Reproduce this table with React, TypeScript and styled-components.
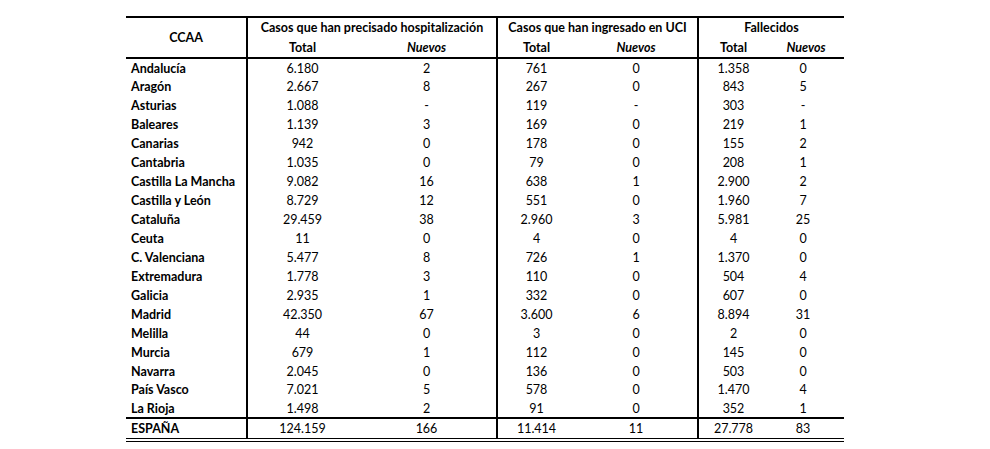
import styled, { createGlobalStyle } from "styled-components";

const GlobalStyle = createGlobalStyle`
  body {
    margin: 0;
    background: #ffffff;
    font-family: Lato, "Open Sans", sans-serif;
    color: #000000;
  }
`;

const Page = styled.div`
  width: 990px;
  height: 449px;
  padding: 16px 0 0 126px;
  box-sizing: border-box;
  overflow: hidden;
`;

const Table = styled.table`
  border-collapse: collapse;
  table-layout: fixed;
  width: 718px;
  font-size: 12.5px;
  border-top: 2px solid #000;
  border-bottom: 4px double #000;
`;

const HeadRow = styled.tr<{ $last?: boolean }>`
  height: ${(p) => (p.$last ? "21px" : "20px")};
  border-bottom: ${(p) => (p.$last ? "2px solid #000" : "none")};
`;

const Row = styled.tr<{ $total?: boolean }>`
  height: ${(p) => (p.$total ? "22px" : "18.95px")};
  border-top: ${(p) => (p.$total ? "2px solid #000" : "none")};
`;

const HeadCell = styled.th<{ $italic?: boolean; $divider?: boolean }>`
  padding: 0;
  font-weight: 700;
  font-style: ${(p) => (p.$italic ? "italic" : "normal")};
  text-align: center;
  vertical-align: middle;
  border-right: ${(p) => (p.$divider ? "2px solid #000" : "none")};
  line-height: 19px;
`;

const NameCell = styled.td`
  padding: 2px 0 0 5px;
  font-weight: 700;
  text-align: left;
  border-right: 2px solid #000;
  line-height: 16px;
  white-space: nowrap;
`;

const NumCell = styled.td<{ $divider?: boolean; $shift?: number }>`
  padding: 2px ${(p) => p.$shift ?? 0}px 0 0;
  text-align: center;
  border-right: ${(p) => (p.$divider ? "2px solid #000" : "none")};
  line-height: 16px;
`;

type Region = [string, string, string, string, string, string, string];

const rows: Region[] = [
  ["Andalucía", "6.180", "2", "761", "0", "1.358", "0"],
  ["Aragón", "2.667", "8", "267", "0", "843", "5"],
  ["Asturias", "1.088", "-", "119", "-", "303", "-"],
  ["Baleares", "1.139", "3", "169", "0", "219", "1"],
  ["Canarias", "942", "0", "178", "0", "155", "2"],
  ["Cantabria", "1.035", "0", "79", "0", "208", "1"],
  ["Castilla La Mancha", "9.082", "16", "638", "1", "2.900", "2"],
  ["Castilla y León", "8.729", "12", "551", "0", "1.960", "7"],
  ["Cataluña", "29.459", "38", "2.960", "3", "5.981", "25"],
  ["Ceuta", "11", "0", "4", "0", "4", "0"],
  ["C. Valenciana", "5.477", "8", "726", "1", "1.370", "0"],
  ["Extremadura", "1.778", "3", "110", "0", "504", "4"],
  ["Galicia", "2.935", "1", "332", "0", "607", "0"],
  ["Madrid", "42.350", "67", "3.600", "6", "8.894", "31"],
  ["Melilla", "44", "0", "3", "0", "2", "0"],
  ["Murcia", "679", "1", "112", "0", "145", "0"],
  ["Navarra", "2.045", "0", "136", "0", "503", "0"],
  ["País Vasco", "7.021", "5", "578", "0", "1.470", "4"],
  ["La Rioja", "1.498", "2", "91", "0", "352", "1"],
];

const total: Region = ["ESPAÑA", "124.159", "166", "11.414", "11", "27.778", "83"];

function DataRow({ data, isTotal }: { data: Region; isTotal?: boolean }) {
  const [name, hT, hN, uT, uN, fT, fN] = data;
  return (
    <Row $total={isTotal}>
      <NameCell>{name}</NameCell>
      <NumCell>{hT}</NumCell>
      <NumCell $divider>{hN}</NumCell>
      <NumCell>{uT}</NumCell>
      <NumCell $divider>{uN}</NumCell>
      <NumCell>{fT}</NumCell>
      <NumCell $shift={6}>{fN}</NumCell>
    </Row>
  );
}

export default function App() {
  return (
    <Page>
      <GlobalStyle />
      <Table>
        <colgroup>
          <col style={{ width: 121 }} />
          <col style={{ width: 110 }} />
          <col style={{ width: 140 }} />
          <col style={{ width: 78 }} />
          <col style={{ width: 123 }} />
          <col style={{ width: 70 }} />
          <col style={{ width: 76 }} />
        </colgroup>
        <thead>
          <HeadRow>
            <HeadCell rowSpan={2} $divider>
              CCAA
            </HeadCell>
            <HeadCell colSpan={2} $divider>
              Casos que han precisado hospitalización
            </HeadCell>
            <HeadCell colSpan={2} $divider>
              Casos que han ingresado en UCI
            </HeadCell>
            <HeadCell colSpan={2}>Fallecidos</HeadCell>
          </HeadRow>
          <HeadRow $last>
            <HeadCell>Total</HeadCell>
            <HeadCell $italic $divider>
              Nuevos
            </HeadCell>
            <HeadCell>Total</HeadCell>
            <HeadCell $italic $divider>
              Nuevos
            </HeadCell>
            <HeadCell>Total</HeadCell>
            <HeadCell $italic>Nuevos</HeadCell>
          </HeadRow>
        </thead>
        <tbody>
          {rows.map((r) => (
            <DataRow key={r[0]} data={r} />
          ))}
          <DataRow data={total} isTotal />
        </tbody>
      </Table>
    </Page>
  );
}
